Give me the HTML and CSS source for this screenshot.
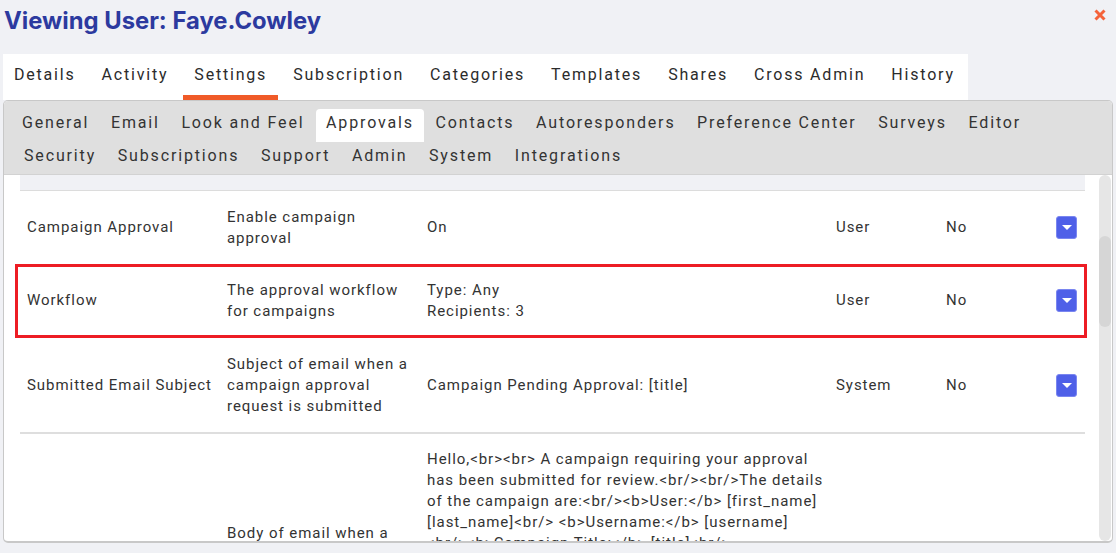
FILE: index.html
```html
<!DOCTYPE html>
<html lang="en">
<head>
<meta charset="UTF-8" />
<title>Viewing User</title>
<link rel="stylesheet" href="styles.css">
</head>
<body>
<header class="page-head">
  <h1>Viewing User: Faye.Cowley</h1>
  <svg class="close" width="12" height="12" viewBox="0 0 12 12"><path d="M1.5 1.5 10.5 10.5M10.5 1.5 1.5 10.5" stroke="#f4623a" stroke-width="3"/></svg>
</header>
<nav class="tabs">
  <a>Details</a>
  <a>Activity</a>
  <a class="active">Settings</a>
  <a>Subscription</a>
  <a>Categories</a>
  <a>Templates</a>
  <a>Shares</a>
  <a>Cross Admin</a>
  <a>History</a>
</nav>
<section class="panel">
  <nav class="subtabs">
    <a>General</a>
    <a>Email</a>
    <a>Look and Feel</a>
    <a class="active">Approvals</a>
    <a>Contacts</a>
    <a>Autoresponders</a>
    <a>Preference Center</a>
    <a>Surveys</a>
    <a>Editor</a>
    <a class="line-start">Security</a>
    <a>Subscriptions</a>
    <a>Support</a>
    <a>Admin</a>
    <a>System</a>
    <a>Integrations</a>
  </nav>
  <div class="body">
    <div class="content">
      <div class="band"></div>
      <div class="row">
        <div>Campaign Approval</div>
        <div>Enable campaign approval</div>
        <div>On</div>
        <div>User</div>
        <div>No</div>
        <div><button class="drop"></button></div>
      </div>
      <div class="row highlighted">
        <div>Workflow</div>
        <div>The approval workflow for campaigns</div>
        <div>Type: Any<br>Recipients: 3</div>
        <div>User</div>
        <div>No</div>
        <div><button class="drop"></button></div>
      </div>
      <div class="row lined">
        <div>Submitted Email Subject</div>
        <div>Subject of email when a campaign approval request is submitted</div>
        <div>Campaign Pending Approval: [title]</div>
        <div>System</div>
        <div>No</div>
        <div><button class="drop"></button></div>
      </div>
      <div class="row">
        <div>Submitted Email Body</div>
        <div>Body of email when a campaign approval request is submitted</div>
        <div>Hello,&lt;br&gt;&lt;br&gt; A campaign requiring your approval has been submitted for review.&lt;br/&gt;&lt;br/&gt;The details of the campaign are:&lt;br/&gt;&lt;b&gt;User:&lt;/b&gt; [first_name] [last_name]&lt;br/&gt; &lt;b&gt;Username:&lt;/b&gt; [username]<br>&lt;br/&gt;&lt;b&gt;Campaign Title:&lt;/b&gt; [title]&lt;br/&gt;<br>&lt;b&gt;Subject:&lt;/b&gt; [subject]&lt;br/&gt;<br>&lt;br/&gt;Please review the campaign<br>and approve or reject it from your<br>account.&lt;br/&gt;&lt;br/&gt;<br>Thank you</div>
        <div>System</div>
        <div>No</div>
        <div><button class="drop"></button></div>
      </div>
    </div>
    <div class="scrollbar"><div class="thumb"></div></div>
  </div>
</section>
</body>
</html>
```

FILE: styles.css
```css
html, body {
  height: 100%;
}
body {
  margin: 0;
  padding: 0 3px 10px;
  box-sizing: border-box;
  display: flex;
  flex-direction: column;
  overflow: hidden;
  background: #f0f1f5;
  color: #333;
  font-family: Roboto, "Liberation Sans", sans-serif;
  font-size: 15px;
  line-height: 21px;
  letter-spacing: 0.95px;
}

/* Title */
.page-head {
  height: 54px;
  flex-shrink: 0;
  display: flex;
  justify-content: space-between;
  align-items: flex-start;
}
.page-head h1 {
  margin: 6px 0 0 1px;
  font-family: Inter, Roboto, sans-serif;
  font-size: 23.8px;
  line-height: 29px;
  font-weight: 700;
  letter-spacing: 0;
  color: #2c3a9f;
}
.close {
  margin: 9px 7px 0 0;
}

/* Main tabs */
.tabs {
  display: flex;
  width: 965px;
  height: 46px;
  flex-shrink: 0;
  background: white;
  font-size: 16px;
  letter-spacing: 1.8px;
}
.tabs a {
  flex-shrink: 0;
  white-space: nowrap;
  padding: 10px 11px 0;
  margin-right: 4px;
  border-bottom: 5px solid transparent;
  color: #2b2b2b;
}
.tabs a.active {
  border-bottom-color: #f05a28;
}

/* Panel */
.panel {
  flex: 1;
  min-height: 0;
  display: flex;
  flex-direction: column;
  overflow: hidden;
  background: white;
  border: 1px solid #c8c8c8;
  border-bottom-width: 2px;
  border-radius: 5px;
}
.subtabs {
  display: flex;
  flex-wrap: wrap;
  flex-shrink: 0;
  height: 74px;
  box-sizing: border-box;
  padding: 8px 8px 0;
  align-content: flex-start;
  background: #dfdfdf;
  border-bottom: 1px solid #d2d2d2;
  font-size: 16px;
  letter-spacing: 1.85px;
}
.subtabs a {
  height: 33px;
  box-sizing: border-box;
  padding: 3px 10px 0;
  margin-right: 1.6px;
  border-radius: 4px 4px 0 0;
  color: #333;
}
.subtabs a.active {
  background: white;
}
.subtabs a.line-start {
  margin-left: 2px;
}

.body {
  flex: 1;
  min-height: 0;
  display: flex;
  overflow: hidden;
}
.content {
  flex: 1;
  min-width: 0;
  padding: 0 14px 0 16px;
}
.band {
  height: 15px;
  background: #f0f1f5;
  border-bottom: 1px solid #dcdcdc;
}
.row {
  display: grid;
  grid-template-columns: 200px 200px 409px 110px 110px 36px;
  align-items: center;
  padding: 15px 0 15px 7px;
  min-height: 43px;
}
.row > div {
  padding-right: 10px;
  box-sizing: border-box;
}
.row.lined {
  padding-top: 17px;
  border-bottom: 2px solid #dedede;
}

/* Red annotation around the row */
.highlighted {
  position: relative;
}
.highlighted::after {
  content: "";
  position: absolute;
  top: 0;
  bottom: -1px;
  left: -5px;
  right: -2px;
  border: 3px solid #ed1c24;
}

.drop {
  display: block;
  width: 21px;
  height: 23px;
  padding: 0;
  border: 1px solid #7a86f0;
  border-radius: 3px;
  background: #4f60e8;
  position: relative;
}
.drop::after {
  content: "";
  position: absolute;
  left: 5px;
  top: 8px;
  border-left: 5px solid transparent;
  border-right: 5px solid transparent;
  border-top: 5px solid white;
}

.scrollbar {
  width: 12px;
  flex-shrink: 0;
  margin-right: 1px;
  background: #e6e6e6;
  border-radius: 6px;
}
.thumb {
  height: 91px;
  margin-top: 61px;
  background: #d6d6d6;
  border-radius: 6px;
}
```
